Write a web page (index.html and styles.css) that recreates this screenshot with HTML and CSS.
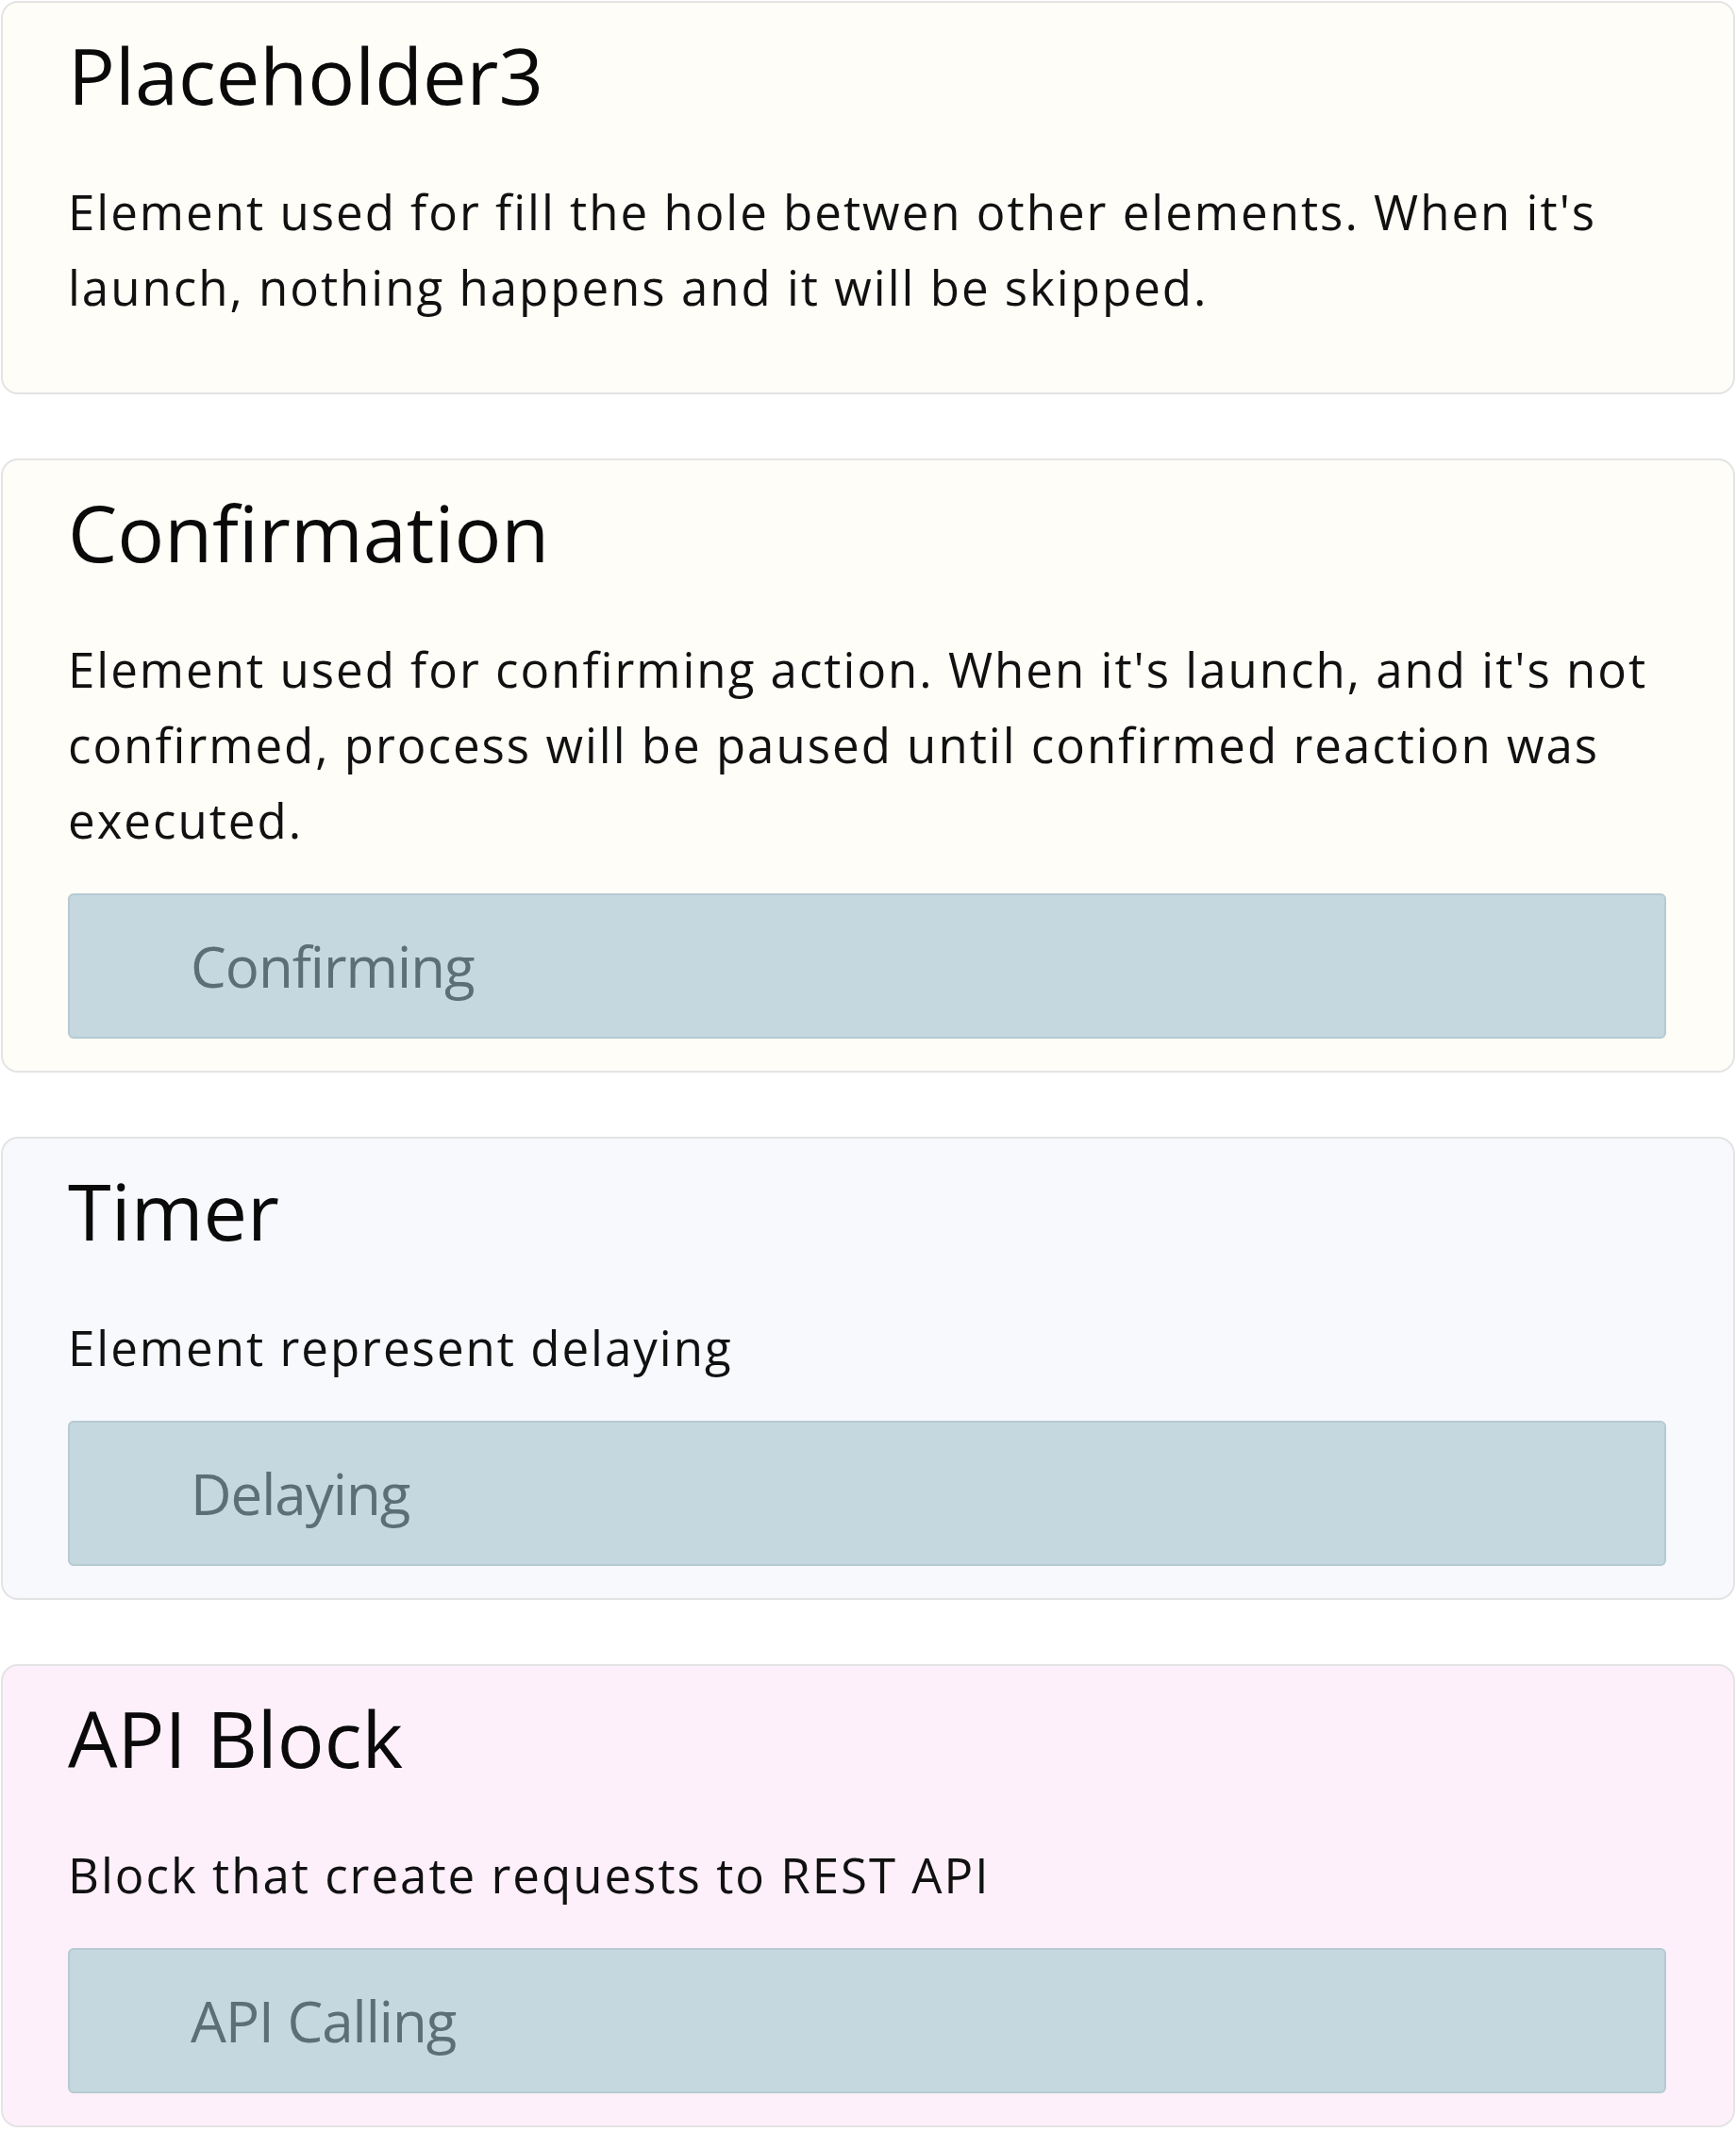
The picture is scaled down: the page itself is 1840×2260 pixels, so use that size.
FILE: index.html
```html
<!DOCTYPE html>
<html lang="en">
<head>
<meta charset="utf-8">
<title>Elements</title>
<link rel="stylesheet" href="styles.css">
</head>
<body>
<main class="list">
  <section class="card card--cream">
    <h2 class="card__title">Placeholder3</h2>
    <p class="card__desc">Element used for fill the hole betwen other elements. When it's launch, nothing happens and it will be skipped.</p>
  </section>
  <section class="card card--cream">
    <h2 class="card__title">Confirmation</h2>
    <p class="card__desc">Element used for confirming action. When it's launch, and it's not confirmed, process will be paused until confirmed reaction was executed.</p>
    <div class="card__block">Confirming</div>
  </section>
  <section class="card card--blue">
    <h2 class="card__title">Timer</h2>
    <p class="card__desc">Element represent delaying</p>
    <div class="card__block">Delaying</div>
  </section>
  <section class="card card--pink">
    <h2 class="card__title">API Block</h2>
    <p class="card__desc">Block that create requests to REST API</p>
    <div class="card__block">API Calling</div>
  </section>
</main>
</body>
</html>
```

FILE: styles.css
```css
html, body {
  margin: 0;
  padding: 0;
  background: #ffffff;
}

body {
  font-family: "Open Sans", "Liberation Sans", sans-serif;
  color: #111111;
}

.list {
  display: flex;
  flex-direction: column;
  gap: 68px;
  padding: 1px 1px 0 1px;
}

.card {
  border: 2px solid #e4e4e4;
  border-radius: 18px;
  padding: 24px 71px 34px 69px;
}

.card--cream { background: #fefdf7; }
.card--blue { background: #f8f9fd; }
.card--pink { background: #fef0fb; }

.card__title {
  margin: 0;
  font-size: 83px;
  line-height: 103px;
  font-weight: 400;
  color: #0a0a0a;
}

.card__desc {
  margin: 54px 0 38px 0;
  font-size: 51px;
  line-height: 80px;
  letter-spacing: 2px;
  font-weight: 400;
  color: #111111;
}

.card__block {
  height: 150px;
  border: 2px solid #b6cad2;
  border-radius: 6px;
  background: #c5d8df;
  padding-left: 128px;
  font-size: 60px;
  line-height: 150px;
  letter-spacing: -1px;
  color: #5e6e77;
}
```
